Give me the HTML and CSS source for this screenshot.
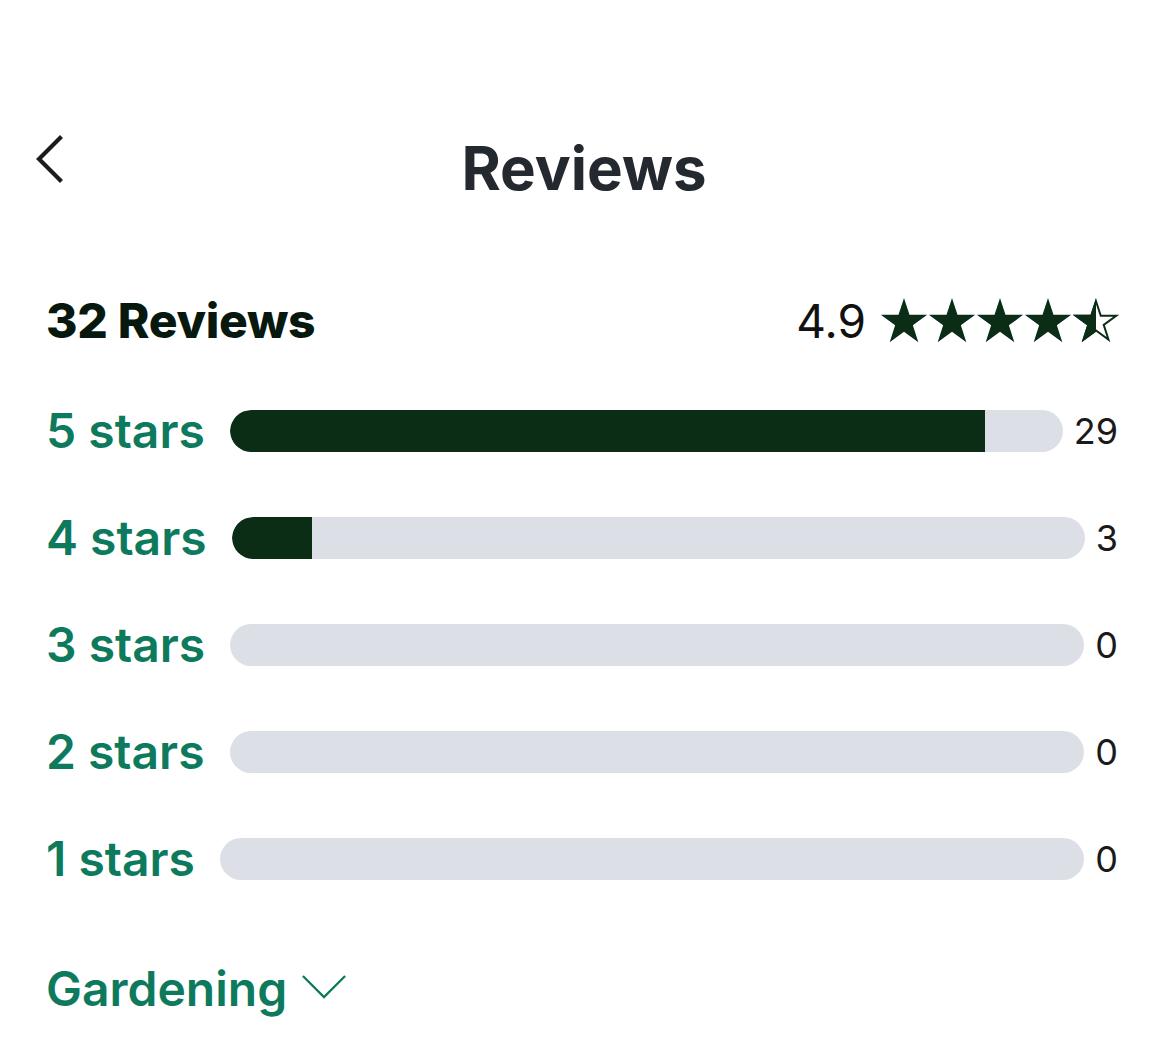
FILE: index.html
```html
<!DOCTYPE html>
<html lang="en">
<head>
<meta charset="utf-8">
<title>Reviews</title>
<link rel="stylesheet" href="styles.css">
</head>
<body>
<div class="page">
  <header class="header">
    <button class="back" aria-label="Back">
      <svg viewBox="0 0 30 48" width="30" height="48"><path d="M26 3 L5 24 L26 45" fill="none" stroke="#1c1c1c" stroke-width="4.2" stroke-linecap="square"/></svg>
    </button>
    <h1 class="title">Reviews</h1>
    <span></span>
  </header>

  <section class="summary">
    <div class="count">32 Reviews</div>
    <div class="rating">
      <span class="score">4.9</span>
      <span class="stars">
        <svg viewBox="0 0 24 24" class="star"><path d="M12 1L14.74 9.43L23.6 9.43L16.43 14.64L19.17 23.07L12 17.86L4.83 23.07L7.57 14.64L0.4 9.43L9.26 9.43Z" fill="#0b2d16"/></svg>
        <svg viewBox="0 0 24 24" class="star"><path d="M12 1L14.74 9.43L23.6 9.43L16.43 14.64L19.17 23.07L12 17.86L4.83 23.07L7.57 14.64L0.4 9.43L9.26 9.43Z" fill="#0b2d16"/></svg>
        <svg viewBox="0 0 24 24" class="star"><path d="M12 1L14.74 9.43L23.6 9.43L16.43 14.64L19.17 23.07L12 17.86L4.83 23.07L7.57 14.64L0.4 9.43L9.26 9.43Z" fill="#0b2d16"/></svg>
        <svg viewBox="0 0 24 24" class="star"><path d="M12 1L14.74 9.43L23.6 9.43L16.43 14.64L19.17 23.07L12 17.86L4.83 23.07L7.57 14.64L0.4 9.43L9.26 9.43Z" fill="#0b2d16"/></svg>
        <svg viewBox="0 0 24 24" class="star"><path d="M12 2.6L14.38 9.93L22.1 9.93L15.86 14.46L18.24 21.77L12 17.24L5.76 21.77L8.14 14.46L1.9 9.93L9.62 9.93Z" fill="none" stroke="#0b2d16" stroke-width="1" stroke-linejoin="miter"/><path d="M12 1L12 17.86L4.83 23.07L7.57 14.64L0.4 9.43L9.26 9.43Z" fill="#0b2d16"/></svg>
      </span>
    </div>
  </section>

  <section class="breakdown">
    <div class="row"><span class="label">5 stars</span><div class="track"><div class="fill" style="width:90.7%"></div></div><span class="num">29</span></div>
    <div class="row"><span class="label">4 stars</span><div class="track"><div class="fill" style="width:9.4%"></div></div><span class="num">3</span></div>
    <div class="row"><span class="label">3 stars</span><div class="track"></div><span class="num">0</span></div>
    <div class="row"><span class="label">2 stars</span><div class="track"></div><span class="num">0</span></div>
    <div class="row"><span class="label">1 stars</span><div class="track"></div><span class="num">0</span></div>
  </section>

  <button class="filter">
    <span>Gardening</span>
    <svg viewBox="0 0 48 28" width="46" height="27"><path d="M2 3 L24 25 L46 3" fill="none" stroke="#0e7a5d" stroke-width="2.4"/></svg>
  </button>
</div>
</body>
</html>
```
FILE: styles.css
```css
* { box-sizing: border-box; }
html, body { margin: 0; padding: 0; background: #fff; }
body { font-family: Inter, "Noto Sans", sans-serif; }

.page {
  width: 1170px;
  height: 1058px;
  padding: 132px 52px 0 46px;
  display: flex;
  flex-direction: column;
  overflow: hidden;
}

.header {
  display: grid;
  grid-template-columns: 1fr auto 1fr;
  align-items: center;
  height: 72px;
}
.back {
  justify-self: start;
  margin-left: -12px;
  padding: 0;
  border: 0;
  background: none;
  display: flex;
  align-items: center;
  margin-top: -18px;
}
.title {
  margin: 0;
  font-size: 60px;
  line-height: 72px;
  font-weight: 700;
  color: #24282f;
  letter-spacing: 0;
  padding-left: 4px;
}

.summary {
  margin-top: 89px;
  display: flex;
  justify-content: space-between;
  align-items: center;
  height: 56px;
}
.count {
  font-size: 48px;
  line-height: 56px;
  font-weight: 800;
  color: #07180e;
  letter-spacing: -0.3px;
}
.rating {
  display: flex;
  align-items: center;
  gap: 14px;
}
.score {
  font-size: 46px;
  line-height: 56px;
  font-weight: 400;
  color: #111;
}
.stars {
  display: flex;
  align-items: center;
  margin-right: -2px;
  margin-top: -2px;
}
.star { width: 48px; height: 48px; display: block; }

.breakdown {
  margin-top: 61px;
  display: flex;
  flex-direction: column;
  gap: 65px;
}
.row {
  display: flex;
  align-items: center;
  height: 42px;
}
.label {
  font-size: 48px;
  line-height: 56px;
  font-weight: 600;
  color: #0e7a5d;
  margin-right: 25px;
  white-space: nowrap;
}
.track {
  flex: 1;
  height: 42px;
  border-radius: 21px;
  background: #dcdfe6;
  overflow: hidden;
}
.fill {
  height: 100%;
  background: #0b2d16;
  border-radius: 21px 0 0 21px;
}
.num {
  margin-left: 11px;
  font-size: 36px;
  line-height: 42px;
  color: #1a1a1a;
}

.filter {
  margin-top: 81px;
  align-self: flex-start;
  display: flex;
  align-items: center;
  gap: 14px;
  padding: 0;
  border: 0;
  background: none;
  font-family: Inter, "Noto Sans", sans-serif;
  font-size: 48px;
  line-height: 56px;
  font-weight: 600;
  color: #0e7a5d;
}
.filter svg { margin-top: -6px; }
```
